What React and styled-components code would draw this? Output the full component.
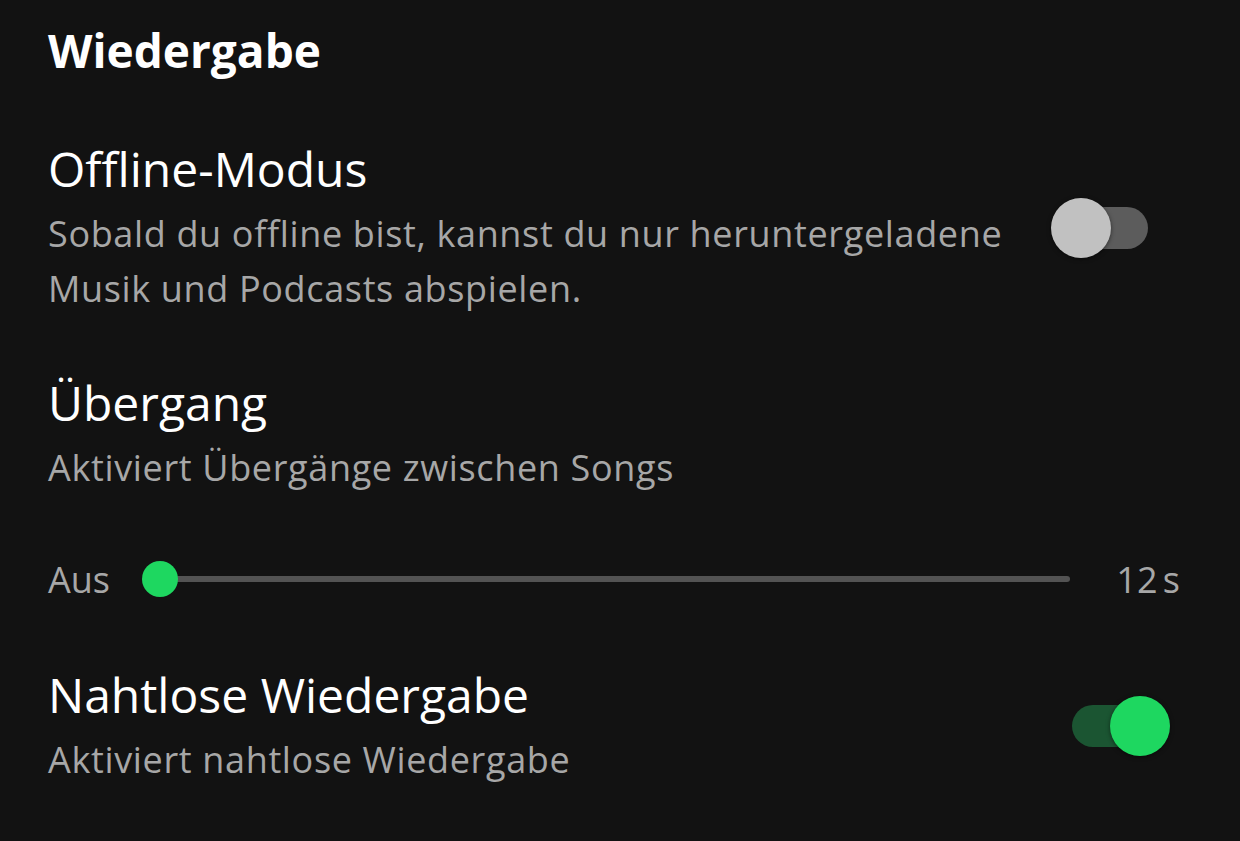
import React from 'react';
import styled, { createGlobalStyle } from 'styled-components';

const GlobalStyle = createGlobalStyle`
  html, body {
    margin: 0;
    padding: 0;
    background: #121212;
  }
  body {
    font-family: "Open Sans", "Noto Sans", sans-serif;
    -webkit-font-smoothing: antialiased;
  }
`;

const Page = styled.div`
  width: 1240px;
  height: 841px;
  background: #121212;
  box-sizing: border-box;
  padding: 10px 60px 0 48px;
  overflow: hidden;
`;

const Heading = styled.h1`
  margin: 0;
  font-size: 46px;
  line-height: 80px;
  font-weight: 700;
  color: #fff;
`;

const Setting = styled.div`
  display: flex;
  align-items: center;
  justify-content: space-between;
  margin-top: ${p => p.gap || 0}px;
`;

const Text = styled.div`
  flex: 1;
`;

const Label = styled.div`
  font-size: 48px;
  line-height: 60px;
  color: #fff;
`;

const Description = styled.div`
  margin-top: 7px;
  font-size: 36px;
  line-height: 55px;
  letter-spacing: 0.65px;
  color: #a7a7a7;
  max-width: 980px;
`;

const Track = styled.div`
  position: relative;
  width: 76px;
  height: 42px;
  border-radius: 21px;
  background: ${p => (p.on ? '#1b5532' : '#5c5c5c')};
  margin-right: 32px;
  flex: none;
`;

const Knob = styled.div`
  position: absolute;
  top: -9px;
  ${p => (p.on ? 'right: -22px;' : 'left: -21px;')}
  width: 60px;
  height: 60px;
  border-radius: 50%;
  background: ${p => (p.on ? '#1ed760' : '#c1c1c1')};
  box-shadow: 0 1px 4px rgba(0, 0, 0, 0.5);
`;

const Toggle = ({ on }) => (
  <Track on={on ? 1 : 0}>
    <Knob on={on ? 1 : 0} />
  </Track>
);

const SliderRow = styled.div`
  display: flex;
  align-items: center;
  margin-top: 54px;
  height: 60px;
`;

const SliderLabel = styled.span`
  font-size: 36px;
  word-spacing: -4px;
  color: #a7a7a7;
  flex: none;
`;

const Rail = styled.div`
  position: relative;
  flex: 1;
  height: 6px;
  margin: 0 46px 0 50px;
  background: #535353;
  border-radius: 3px;
`;

const Thumb = styled.div`
  position: absolute;
  left: -18px;
  top: -15px;
  width: 36px;
  height: 36px;
  border-radius: 50%;
  background: #1ed760;
`;

export default function App() {
  return (
    <Page>
      <GlobalStyle />
      <Heading>Wiedergabe</Heading>

      <Setting gap={49}>
        <Text>
          <Label>Offline-Modus</Label>
          <Description>
            Sobald du offline bist, kannst du nur heruntergeladene Musik und Podcasts abspielen.
          </Description>
        </Text>
        <Toggle on={false} />
      </Setting>

      <Setting gap={57}>
        <Text>
          <Label>Übergang</Label>
          <Description>Aktiviert Übergänge zwischen Songs</Description>
        </Text>
      </Setting>

      <SliderRow>
        <SliderLabel>Aus</SliderLabel>
        <Rail>
          <Thumb />
        </Rail>
        <SliderLabel>12 s</SliderLabel>
      </SliderRow>

      <Setting gap={56}>
        <Text>
          <Label>Nahtlose Wiedergabe</Label>
          <Description>Aktiviert nahtlose Wiedergabe</Description>
        </Text>
        <Toggle on />
      </Setting>
    </Page>
  );
}
